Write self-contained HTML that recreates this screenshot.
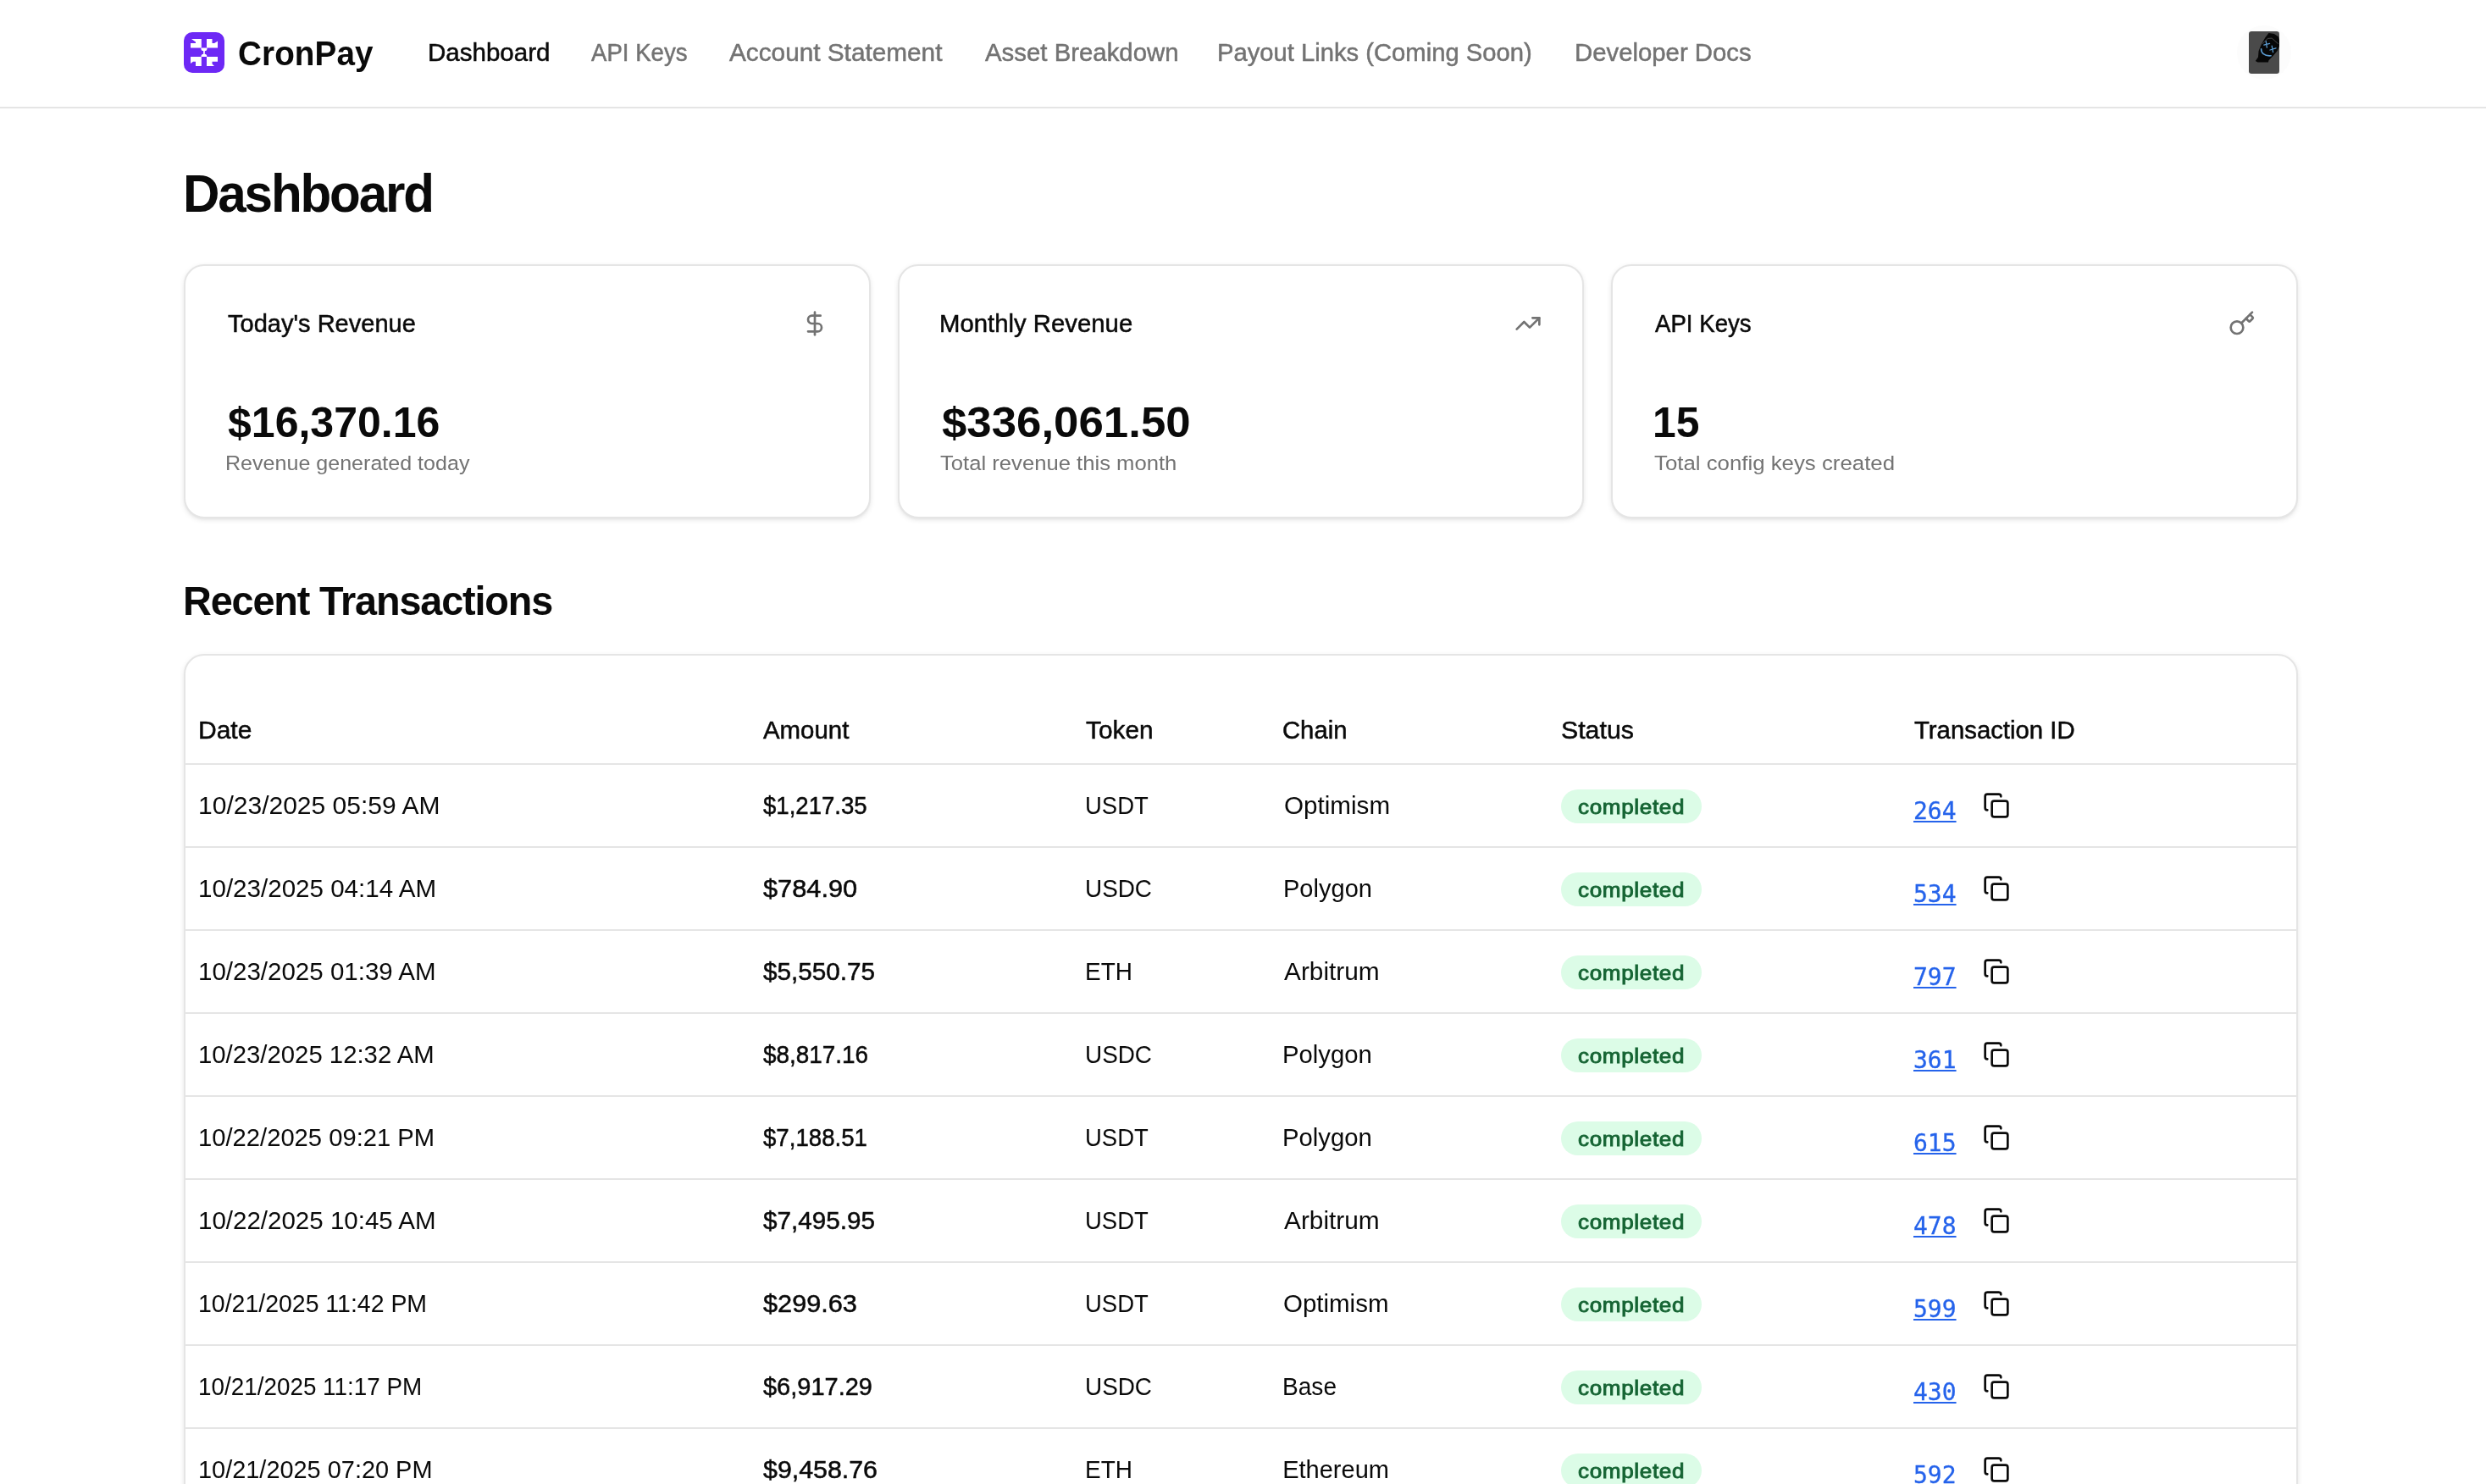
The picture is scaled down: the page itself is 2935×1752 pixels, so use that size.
<!DOCTYPE html>
<html lang="en">
<head>
<meta charset="utf-8">
<title>CronPay Dashboard</title>
<style>
*{box-sizing:border-box;margin:0;padding:0}
html,body{width:2935px;height:1752px;background:#fff}
body{font-family:"Liberation Sans",Arial,sans-serif;color:#0a0a0a}
.page{position:relative;width:2935px;height:1752px;overflow:hidden;background:#fff;will-change:transform}
a{color:inherit;text-decoration:none}
.abs{position:absolute;white-space:nowrap;line-height:1;transform-origin:0 0}
header{position:absolute;left:0;top:0;width:2935px;height:128px;border-bottom:2px solid #e5e5e5;background:#fff}
.logo{position:absolute;left:217px;top:38px;width:48px;height:48px}
.brand{font-size:40.5px;font-weight:700}
.nav{font-size:29px;color:#737373;-webkit-text-stroke:0.5px currentColor}
.nav.on{color:#0a0a0a}
.avring{position:absolute;left:2641px;top:30px;width:64px;height:64px;border-radius:50%;background:#fcfcfc}
.avatar{position:absolute;left:2655px;top:37px;width:36px;height:50px}
h1{font-size:63px;font-weight:700}
h2{font-size:49px;font-weight:700}
.card{position:absolute;background:#fff;border:2px solid #e5e5e5;border-radius:24px;box-shadow:0 2px 6px 0 rgba(0,0,0,.085),0 2px 4px -2px rgba(0,0,0,.085)}
.stat{top:312px;height:300px}
.stat .ttl{font-size:29px;-webkit-text-stroke:0.5px currentColor}
.stat .val{font-size:49.5px;font-weight:700}
.stat .sub{font-size:24.5px;color:#737373}
.stat svg{position:absolute;right:48px;top:52px;width:32px;height:32px;stroke:#737373;fill:none;stroke-width:2;stroke-linecap:round;stroke-linejoin:round}
.tbl{left:217px;top:772px;width:2496px;height:1100px}
.hr{position:absolute;left:0;width:2492px;height:2px;background:#e5e5e5}
.th{font-size:29px;-webkit-text-stroke:0.5px currentColor}
.row{position:absolute;left:0;width:2492px;height:96px}
.td{font-size:29px}
.am{-webkit-text-stroke:0.5px currentColor}
.badge{position:absolute;top:29px;left:1624px;height:40px;width:166px;border-radius:20px;background:#dcfce7;color:#166534}
.bt{font-size:23px;letter-spacing:0.6px;font-weight:400;-webkit-text-stroke:0.9px currentColor}
.lnk{left:2040px;top:41.4px;font-size:28px;font-family:"DejaVu Sans Mono","Liberation Mono",monospace;color:#2563eb;-webkit-text-stroke:0.3px currentColor;text-decoration:underline;text-decoration-thickness:2px;text-underline-offset:1.6px}
.row svg{position:absolute;left:2122.4px;top:32px;width:32px;height:32px;stroke:#0a0a0a;fill:none;stroke-width:2;stroke-linecap:round;stroke-linejoin:round}
</style>
</head>
<body>
<div class="page">
<header>
  <svg class="logo" viewBox="0 0 48 48">
    <rect width="48" height="48" rx="10" fill="#6d28f5"/>
    <g fill="#fff">
      <path d="M9 8 L20.8 8 L20.8 18.5 L8 18.5 L8 13 L14 13 L14 11.5 Z"/>
      <path d="M27 8 L33.5 8 L33.5 13 L36 13 L40 10.5 L40 18.5 L27 18.5 Z"/>
      <path d="M8 29 L20.8 29 L20.8 40 L14 40 L14 34.7 L11 34.7 L8 37 Z"/>
      <path d="M27 29 L40 29 L40 34.7 L33.5 34.7 L33.5 37.5 L36 40 L27 40 Z"/>
      <path d="M20.4 18.5 H27.5 V19.4 C27.5 21.1 26.4 22 24.9 22.1 L24.7 25.7 C26.2 25.8 27.3 26.7 27.3 28.2 V29 H20.5 V28.2 C20.5 26.7 21.6 25.8 23.2 25.7 L23.1 22.1 C21.5 22 20.4 21.1 20.4 19.4 Z"/>
    </g>
  </svg>
  <div id="brand" class="abs brand" style="left:280.90px;top:43.0px;letter-spacing:0.087px;transform:scaleX(0.955)">CronPay</div>
  <a id="n1" class="abs nav on" style="left:504.50px;top:48.0px;transform:scaleX(1.0184)">Dashboard</a>
  <a id="n2" class="abs nav" style="left:697.70px;top:48.0px;transform:scaleX(0.9514)">API Keys</a>
  <a id="n3" class="abs nav" style="left:861.00px;top:48.0px;transform:scaleX(1.0260)">Account Statement</a>
  <a id="n4" class="abs nav" style="left:1162.80px;top:48.0px;transform:scaleX(1.0130)">Asset Breakdown</a>
  <a id="n5" class="abs nav" style="left:1437.40px;top:48.0px;transform:scaleX(1.0068)">Payout Links (Coming Soon)</a>
  <a id="n6" class="abs nav" style="left:1858.60px;top:48.0px;transform:scaleX(1.0112)">Developer Docs</a>
  <div class="avring"></div>
  <svg class="avatar" viewBox="0 0 36 50">
    <rect width="36" height="50" rx="3.2" fill="#4a4a4a"/>
    <path d="M23.5 1.9 L29.9 3 L34.8 6.2 L36 10 L36 17.5 L33.7 22.9 L28.8 28.8 L23.5 34.2 L22.9 36.4 L10.5 36.4 L7.8 35 L11 30.5 L11.6 22.9 L14.8 15.4 L19.1 7.8 Z" fill="#070707"/>
    <path d="M15.9 14.8 L22.4 8.4 L27.2 8.1 L34.8 14.8" stroke="#8a8a8a" stroke-width=".5" fill="none"/>
    <g stroke="#5b9bd0" stroke-width="1.3" fill="none" stroke-linecap="round">
      <path d="M20.2 11.6 L21.4 19.2 M17.8 16.2 L24.6 14.4"/>
      <path d="M27.2 17.2 L28.6 24.6 M25 22 L32 19.8"/>
      <path d="M14.6 20.8 C14.4 25 18 29.6 26.1 28.8" stroke-width="1.6"/>
    </g>
  </svg>
</header>

<h1 id="h1" class="abs" style="left:216.00px;top:197.0px;letter-spacing:-2.254px;transform:scaleX(0.955)">Dashboard</h1>

<section class="card stat" style="left:217px;width:811px">
  <div id="c1t" class="abs ttl" style="left:49.60px;top:54.0px;transform:scaleX(1.0014)">Today's Revenue</div>
  <svg viewBox="0 0 24 24"><line x1="12" y1="2" x2="12" y2="22"/><path d="M17 5H9.5a3.5 3.5 0 0 0 0 7h5a3.5 3.5 0 0 1 0 7H6"/></svg>
  <div id="c1v" class="abs val" style="left:49.50px;top:160.0px;transform:scaleX(1.0103)">$16,370.16</div>
  <div id="c1s" class="abs sub" style="left:47.20px;top:221.0px;transform:scaleX(1.0229)">Revenue generated today</div>
</section>
<section class="card stat" style="left:1060px;width:810px">
  <div id="c2t" class="abs ttl" style="left:47.20px;top:54.0px;transform:scaleX(1.0111)">Monthly Revenue</div>
  <svg viewBox="0 0 24 24"><polyline points="22 7 13.5 15.5 8.5 10.5 2 17"/><polyline points="16 7 22 7 22 13"/></svg>
  <div id="c2v" class="abs val" style="left:49.50px;top:160.0px;transform:scaleX(1.0666)">$336,061.50</div>
  <div id="c2s" class="abs sub" style="left:47.70px;top:221.0px;transform:scaleX(1.0466)">Total revenue this month</div>
</section>
<section class="card stat" style="left:1902px;width:811px">
  <div id="c3t" class="abs ttl" style="left:49.60px;top:54.0px;transform:scaleX(0.9526)">API Keys</div>
  <svg viewBox="0 0 24 24"><path d="m15.5 7.5 2.3 2.3a1 1 0 0 0 1.4 0l2.1-2.1a1 1 0 0 0 0-1.4L19 4"/><path d="m21 2-9.6 9.6"/><circle cx="7.5" cy="15.5" r="5.5"/></svg>
  <div id="c3v" class="abs val" style="left:46.80px;top:160.0px;transform:scaleX(1.0049)">15</div>
  <div id="c3s" class="abs sub" style="left:48.60px;top:221.0px;transform:scaleX(1.0533)">Total config keys created</div>
</section>

<h2 id="h2" class="abs" style="left:216.30px;top:685.0px;letter-spacing:-1.188px;transform:scaleX(0.955)">Recent Transactions</h2>

<section class="card tbl">
  <div id="th1" class="abs th" style="left:15.00px;top:74.0px;transform:scaleX(1.0344)">Date</div>
  <div id="th2" class="abs th" style="left:681.60px;top:74.0px;transform:scaleX(1.0136)">Amount</div>
  <div id="th3" class="abs th" style="left:1063.20px;top:74.0px;transform:scaleX(1.0277)">Token</div>
  <div id="th4" class="abs th" style="left:1295.10px;top:74.0px;transform:scaleX(1.0082)">Chain</div>
  <div id="th5" class="abs th" style="left:1623.80px;top:74.0px;transform:scaleX(1.0446)">Status</div>
  <div id="th6" class="abs th" style="left:2040.70px;top:74.0px;transform:scaleX(1.0114)">Transaction ID</div>
  <div class="hr" style="top:127px"></div>
  <div class="row" style="top:129px">
    <div id="r0d" class="abs td" style="left:15.30px;top:34.0px;transform:scaleX(1.0353)">10/23/2025 05:59 AM</div><div id="r0a" class="abs td am" style="left:681.80px;top:34.0px;transform:scaleX(0.9511)">$1,217.35</div><div id="r0t" class="abs td" style="left:1062.20px;top:34.0px;transform:scaleX(0.9468)">USDT</div><div id="r0c" class="abs td" style="left:1296.60px;top:34.0px;transform:scaleX(1.0214)">Optimism</div>
    <div class="badge"><span id="r0b" class="abs bt" style="left:19.80px;top:10.0px;transform:scaleX(1.1311)">completed</span></div>
    <a class="abs lnk">264</a>
    <svg viewBox="0 0 24 24"><rect width="14" height="14" x="8" y="8" rx="2" ry="2"/><path d="M4 16c-1.1 0-2-.9-2-2V4c0-1.1.9-2 2-2h10c1.1 0 2 .9 2 2"/></svg>
  </div>
  <div class="hr" style="top:225px"></div>
  <div class="row" style="top:227px">
    <div id="r1d" class="abs td" style="left:15.30px;top:34.0px;transform:scaleX(1.0194)">10/23/2025 04:14 AM</div><div id="r1a" class="abs td am" style="left:681.80px;top:34.0px;transform:scaleX(1.0607)">$784.90</div><div id="r1t" class="abs td" style="left:1062.20px;top:34.0px;transform:scaleX(0.9615)">USDC</div><div id="r1c" class="abs td" style="left:1295.60px;top:34.0px;transform:scaleX(1.0014)">Polygon</div>
    <div class="badge"><span id="r1b" class="abs bt" style="left:19.80px;top:10.0px;transform:scaleX(1.1311)">completed</span></div>
    <a class="abs lnk">534</a>
    <svg viewBox="0 0 24 24"><rect width="14" height="14" x="8" y="8" rx="2" ry="2"/><path d="M4 16c-1.1 0-2-.9-2-2V4c0-1.1.9-2 2-2h10c1.1 0 2 .9 2 2"/></svg>
  </div>
  <div class="hr" style="top:323px"></div>
  <div class="row" style="top:325px">
    <div id="r2d" class="abs td" style="left:15.10px;top:34.0px;transform:scaleX(1.0176)">10/23/2025 01:39 AM</div><div id="r2a" class="abs td am" style="left:681.60px;top:34.0px;transform:scaleX(1.0234)">$5,550.75</div><div id="r2t" class="abs td" style="left:1062.40px;top:34.0px;transform:scaleX(0.9635)">ETH</div><div id="r2c" class="abs td" style="left:1297.20px;top:34.0px;transform:scaleX(1.0286)">Arbitrum</div>
    <div class="badge"><span id="r2b" class="abs bt" style="left:19.80px;top:10.0px;transform:scaleX(1.1311)">completed</span></div>
    <a class="abs lnk">797</a>
    <svg viewBox="0 0 24 24"><rect width="14" height="14" x="8" y="8" rx="2" ry="2"/><path d="M4 16c-1.1 0-2-.9-2-2V4c0-1.1.9-2 2-2h10c1.1 0 2 .9 2 2"/></svg>
  </div>
  <div class="hr" style="top:421px"></div>
  <div class="row" style="top:423px">
    <div id="r3d" class="abs td" style="left:15.10px;top:34.0px;transform:scaleX(1.0108)">10/23/2025 12:32 AM</div><div id="r3a" class="abs td am" style="left:681.60px;top:34.0px;transform:scaleX(0.9604)">$8,817.16</div><div id="r3t" class="abs td" style="left:1062.40px;top:34.0px;transform:scaleX(0.9615)">USDC</div><div id="r3c" class="abs td" style="left:1295.20px;top:34.0px;transform:scaleX(1.0105)">Polygon</div>
    <div class="badge"><span id="r3b" class="abs bt" style="left:19.80px;top:10.0px;transform:scaleX(1.1311)">completed</span></div>
    <a class="abs lnk">361</a>
    <svg viewBox="0 0 24 24"><rect width="14" height="14" x="8" y="8" rx="2" ry="2"/><path d="M4 16c-1.1 0-2-.9-2-2V4c0-1.1.9-2 2-2h10c1.1 0 2 .9 2 2"/></svg>
  </div>
  <div class="hr" style="top:519px"></div>
  <div class="row" style="top:521px">
    <div id="r4d" class="abs td" style="left:15.10px;top:34.0px;transform:scaleX(1.0065)">10/22/2025 09:21 PM</div><div id="r4a" class="abs td am" style="left:681.60px;top:34.0px;transform:scaleX(0.9526)">$7,188.51</div><div id="r4t" class="abs td" style="left:1062.40px;top:34.0px;transform:scaleX(0.9468)">USDT</div><div id="r4c" class="abs td" style="left:1295.20px;top:34.0px;transform:scaleX(1.0105)">Polygon</div>
    <div class="badge"><span id="r4b" class="abs bt" style="left:19.80px;top:10.0px;transform:scaleX(1.1311)">completed</span></div>
    <a class="abs lnk">615</a>
    <svg viewBox="0 0 24 24"><rect width="14" height="14" x="8" y="8" rx="2" ry="2"/><path d="M4 16c-1.1 0-2-.9-2-2V4c0-1.1.9-2 2-2h10c1.1 0 2 .9 2 2"/></svg>
  </div>
  <div class="hr" style="top:617px"></div>
  <div class="row" style="top:619px">
    <div id="r5d" class="abs td" style="left:15.10px;top:34.0px;transform:scaleX(1.0176)">10/22/2025 10:45 AM</div><div id="r5a" class="abs td am" style="left:681.60px;top:34.0px;transform:scaleX(1.0232)">$7,495.95</div><div id="r5t" class="abs td" style="left:1062.40px;top:34.0px;transform:scaleX(0.9468)">USDT</div><div id="r5c" class="abs td" style="left:1297.20px;top:34.0px;transform:scaleX(1.0286)">Arbitrum</div>
    <div class="badge"><span id="r5b" class="abs bt" style="left:19.80px;top:10.0px;transform:scaleX(1.1311)">completed</span></div>
    <a class="abs lnk">478</a>
    <svg viewBox="0 0 24 24"><rect width="14" height="14" x="8" y="8" rx="2" ry="2"/><path d="M4 16c-1.1 0-2-.9-2-2V4c0-1.1.9-2 2-2h10c1.1 0 2 .9 2 2"/></svg>
  </div>
  <div class="hr" style="top:715px"></div>
  <div class="row" style="top:717px">
    <div id="r6d" class="abs td" style="left:15.10px;top:34.0px;transform:scaleX(0.9815)">10/21/2025 11:42 PM</div><div id="r6a" class="abs td am" style="left:681.60px;top:34.0px;transform:scaleX(1.0583)">$299.63</div><div id="r6t" class="abs td" style="left:1062.40px;top:34.0px;transform:scaleX(0.9468)">USDT</div><div id="r6c" class="abs td" style="left:1296.20px;top:34.0px;transform:scaleX(1.0162)">Optimism</div>
    <div class="badge"><span id="r6b" class="abs bt" style="left:19.80px;top:10.0px;transform:scaleX(1.1311)">completed</span></div>
    <a class="abs lnk">599</a>
    <svg viewBox="0 0 24 24"><rect width="14" height="14" x="8" y="8" rx="2" ry="2"/><path d="M4 16c-1.1 0-2-.9-2-2V4c0-1.1.9-2 2-2h10c1.1 0 2 .9 2 2"/></svg>
  </div>
  <div class="hr" style="top:813px"></div>
  <div class="row" style="top:815px">
    <div id="r7d" class="abs td" style="left:15.10px;top:34.0px;transform:scaleX(0.9603)">10/21/2025 11:17 PM</div><div id="r7a" class="abs td am" style="left:681.60px;top:34.0px;transform:scaleX(0.9994)">$6,917.29</div><div id="r7t" class="abs td" style="left:1062.40px;top:34.0px;transform:scaleX(0.9615)">USDC</div><div id="r7c" class="abs td" style="left:1295.20px;top:34.0px;transform:scaleX(0.9683)">Base</div>
    <div class="badge"><span id="r7b" class="abs bt" style="left:19.80px;top:10.0px;transform:scaleX(1.1311)">completed</span></div>
    <a class="abs lnk">430</a>
    <svg viewBox="0 0 24 24"><rect width="14" height="14" x="8" y="8" rx="2" ry="2"/><path d="M4 16c-1.1 0-2-.9-2-2V4c0-1.1.9-2 2-2h10c1.1 0 2 .9 2 2"/></svg>
  </div>
  <div class="hr" style="top:911px"></div>
  <div class="row" style="top:913px">
    <div id="r8d" class="abs td" style="left:15.10px;top:34.0px;transform:scaleX(0.9969)">10/21/2025 07:20 PM</div><div id="r8a" class="abs td am" style="left:681.60px;top:34.0px;transform:scaleX(1.0464)">$9,458.76</div><div id="r8t" class="abs td" style="left:1062.40px;top:34.0px;transform:scaleX(0.9635)">ETH</div><div id="r8c" class="abs td" style="left:1295.20px;top:34.0px;transform:scaleX(1.0000)">Ethereum</div>
    <div class="badge"><span id="r8b" class="abs bt" style="left:19.80px;top:10.0px;transform:scaleX(1.1311)">completed</span></div>
    <a class="abs lnk">592</a>
    <svg viewBox="0 0 24 24"><rect width="14" height="14" x="8" y="8" rx="2" ry="2"/><path d="M4 16c-1.1 0-2-.9-2-2V4c0-1.1.9-2 2-2h10c1.1 0 2 .9 2 2"/></svg>
  </div>
</section>
</div>
</body>
</html>
